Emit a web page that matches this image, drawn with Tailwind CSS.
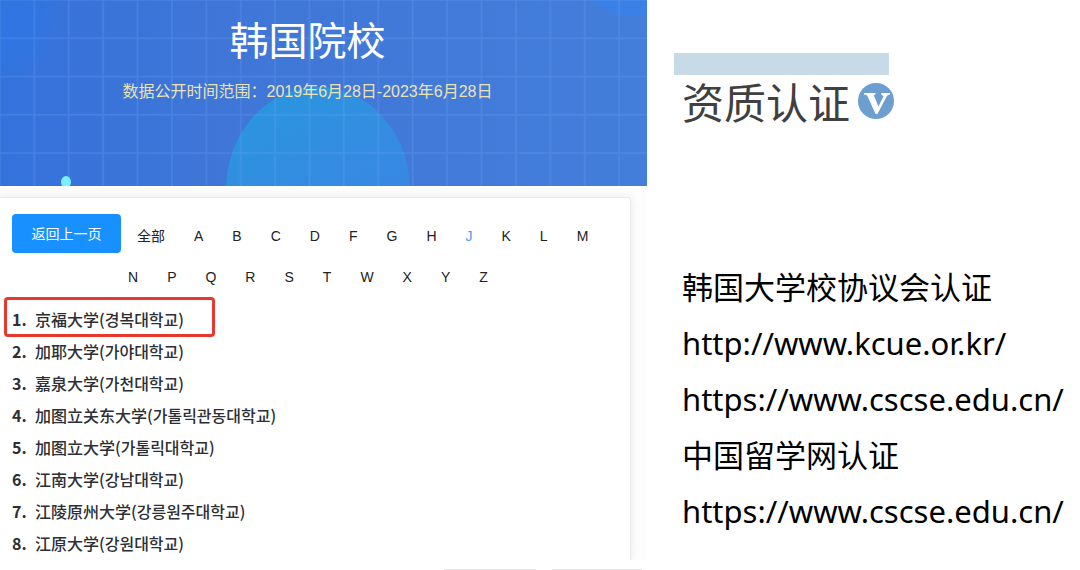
<!DOCTYPE html>
<html lang="zh-CN">
<head>
  <meta charset="UTF-8" />
  <meta name="viewport" content="width=device-width, initial-scale=1.0"/>
  <title>韩国院校 - 资质认证</title>
  <script src="https://cdn.jsdelivr.net/npm/@tailwindcss/browser@4"></script>
</head>
<body class="bg-white min-h-screen font-['Liberation_Sans','Noto_Sans_CJK_SC',sans-serif]">
  <div class="grid grid-cols-[647fr_433fr]">

    <!-- school list -->
    <section class="min-w-0">
      <header class="relative h-[186px] overflow-hidden bg-[#3f7ad8] text-center">
        <svg class="absolute inset-0 w-full h-full" viewBox="0 0 647 186" preserveAspectRatio="none" aria-hidden="true">
          <defs>
            <linearGradient id="bg" x1="0" y1="0" x2="1" y2="0">
              <stop offset="0" stop-color="#3572dc"/>
              <stop offset="0.35" stop-color="#3f76d7"/>
              <stop offset="1" stop-color="#447edb"/>
            </linearGradient>
            <linearGradient id="ball" x1="0.3" y1="0" x2="0.6" y2="0.6">
              <stop offset="0" stop-color="#2b95df"/>
              <stop offset="1" stop-color="#3888e2"/>
            </linearGradient>
            <radialGradient id="corner">
              <stop offset="0" stop-color="#2f76e2"/>
              <stop offset="0.6" stop-color="#2f76e2" stop-opacity="0.8"/>
              <stop offset="1" stop-color="#2f76e2" stop-opacity="0"/>
            </radialGradient>
            <pattern id="grid" x="-1" y="-1" width="34.4" height="38.3" patternUnits="userSpaceOnUse">
              <path d="M0 0.5H34.4M0.5 0V38.3" stroke="#6fa8f5" stroke-opacity="0.24" stroke-width="2.4" fill="none"/>
            </pattern>
          </defs>
          <rect width="647" height="186" fill="url(#bg)"/>
          <ellipse cx="0" cy="10" rx="60" ry="75" fill="url(#corner)"/>
          <ellipse cx="632" cy="-22" rx="48" ry="38" fill="#3b80e6"/>
          <ellipse cx="318" cy="190" rx="92" ry="103" fill="url(#ball)"/>
          <rect width="647" height="186" fill="url(#grid)"/>
          <ellipse cx="66" cy="182" rx="5" ry="6" fill="#78f0ff"/>
        </svg>
        <div class="relative pt-4 pr-8">
          <h1 class="text-[39px] leading-[52px] text-white">韩国院校</h1>
          <p class="mt-3 text-base leading-6 text-[#ece3b4]">数据公开时间范围：2019年6月28日-2023年6月28日</p>
        </div>
      </header>

      <div class="overflow-hidden bg-[#fdfdfd] pt-[11px] pr-4">
        <div class="h-[363px] rounded-tr border-t border-r border-[#e9e9ec] bg-white pt-4 pl-3 shadow-[0_0_10px_rgba(0,0,0,0.08)]">
          <nav class="text-sm text-[#222]">
            <div class="flex items-center whitespace-nowrap">
              <button type="button" class="h-[39px] w-[109px] rounded bg-[#1890ff] text-white">返回上一页</button>
              <div class="ml-4 mt-1 flex gap-[29px]">
                <a href="#">全部</a>
                <a href="#">A</a>
                <a href="#">B</a>
                <a href="#">C</a>
                <a href="#">D</a>
                <a href="#">F</a>
                <a href="#">G</a>
                <a href="#">H</a>
                <a href="#" class="text-[#4a9df8]">J</a>
                <a href="#">K</a>
                <a href="#">L</a>
                <a href="#">M</a>
              </div>
            </div>
            <div class="mt-3.5 flex gap-[29px] pl-[116px]">
              <a href="#">N</a>
              <a href="#">P</a>
              <a href="#">Q</a>
              <a href="#">R</a>
              <a href="#">S</a>
              <a href="#">T</a>
              <a href="#">W</a>
              <a href="#">X</a>
              <a href="#">Y</a>
              <a href="#">Z</a>
            </div>
          </nav>

          <ol class="mt-4 whitespace-nowrap text-base leading-8 font-medium text-[#2c2f33] font-['Noto_Sans_CJK_SC','Noto_Sans_CJK_KR',sans-serif]">
            <li class="relative flex">
              <b class="w-[23px]">1.</b>京福大学(경복대학교)
              <span class="absolute -top-1.5 -left-2 h-10 w-[211px] rounded border-3 border-[#e8382c]"></span>
            </li>
            <li class="flex"><b class="w-[23px]">2.</b>加耶大学(가야대학교)</li>
            <li class="flex"><b class="w-[23px]">3.</b>嘉泉大学(가천대학교)</li>
            <li class="flex"><b class="w-[23px]">4.</b>加图立关东大学(가톨릭관동대학교)</li>
            <li class="flex"><b class="w-[23px]">5.</b>加图立大学(가톨릭대학교)</li>
            <li class="flex"><b class="w-[23px]">6.</b>江南大学(강남대학교)</li>
            <li class="flex"><b class="w-[23px]">7.</b>江陵原州大学(강릉원주대학교)</li>
            <li class="flex"><b class="w-[23px]">8.</b>江原大学(강원대학교)</li>
          </ol>
        </div>
      </div>

      <!-- top edge of the pager -->
      <div class="flex justify-end gap-4 bg-white pt-[9px] pr-[5px]">
        <span class="h-px w-[92px] bg-[#e4e4e4]"></span>
        <span class="h-px w-[90px] bg-[#e4e4e4]"></span>
      </div>
    </section>

    <!-- certification -->
    <section class="min-w-0 pt-[53px] pl-[27px]">
      <div class="h-[22px] w-[215px] bg-[#c6dbe7]"></div>
      <div class="flex items-center gap-2 pl-2">
        <h2 class="text-[42px] leading-[52px] text-[#404040] font-['Noto_Sans_CJK_SC',sans-serif]">资质认证</h2>
        <svg class="size-9" viewBox="0 0 36 36" aria-hidden="true">
          <circle cx="18" cy="18" r="18" fill="#6c9fd0"/>
          <path d="M6 10H17.5V11.6L15.8 12L20.4 23.5L25.6 13.2L23.2 11.6V10H32V11.6C30.2 11.9 29.2 12.5 28.3 14.2L19.4 31H17.6L9.6 13.4C8.9 12.1 8 11.7 6 11.6Z" fill="#fff"/>
        </svg>
      </div>
      <div class="mt-[132px] flex flex-col pl-2 whitespace-nowrap text-[31px] leading-14 text-black font-['Noto_Sans','Noto_Sans_CJK_SC',sans-serif]">
        <p>韩国大学校协议会认证</p>
        <a href="http://www.kcue.or.kr/">http://www.kcue.or.kr/</a>
        <a href="https://www.cscse.edu.cn/">https://www.cscse.edu.cn/</a>
        <p>中国留学网认证</p>
        <a href="https://www.cscse.edu.cn/">https://www.cscse.edu.cn/</a>
      </div>
    </section>

  </div>
</body>
</html>
